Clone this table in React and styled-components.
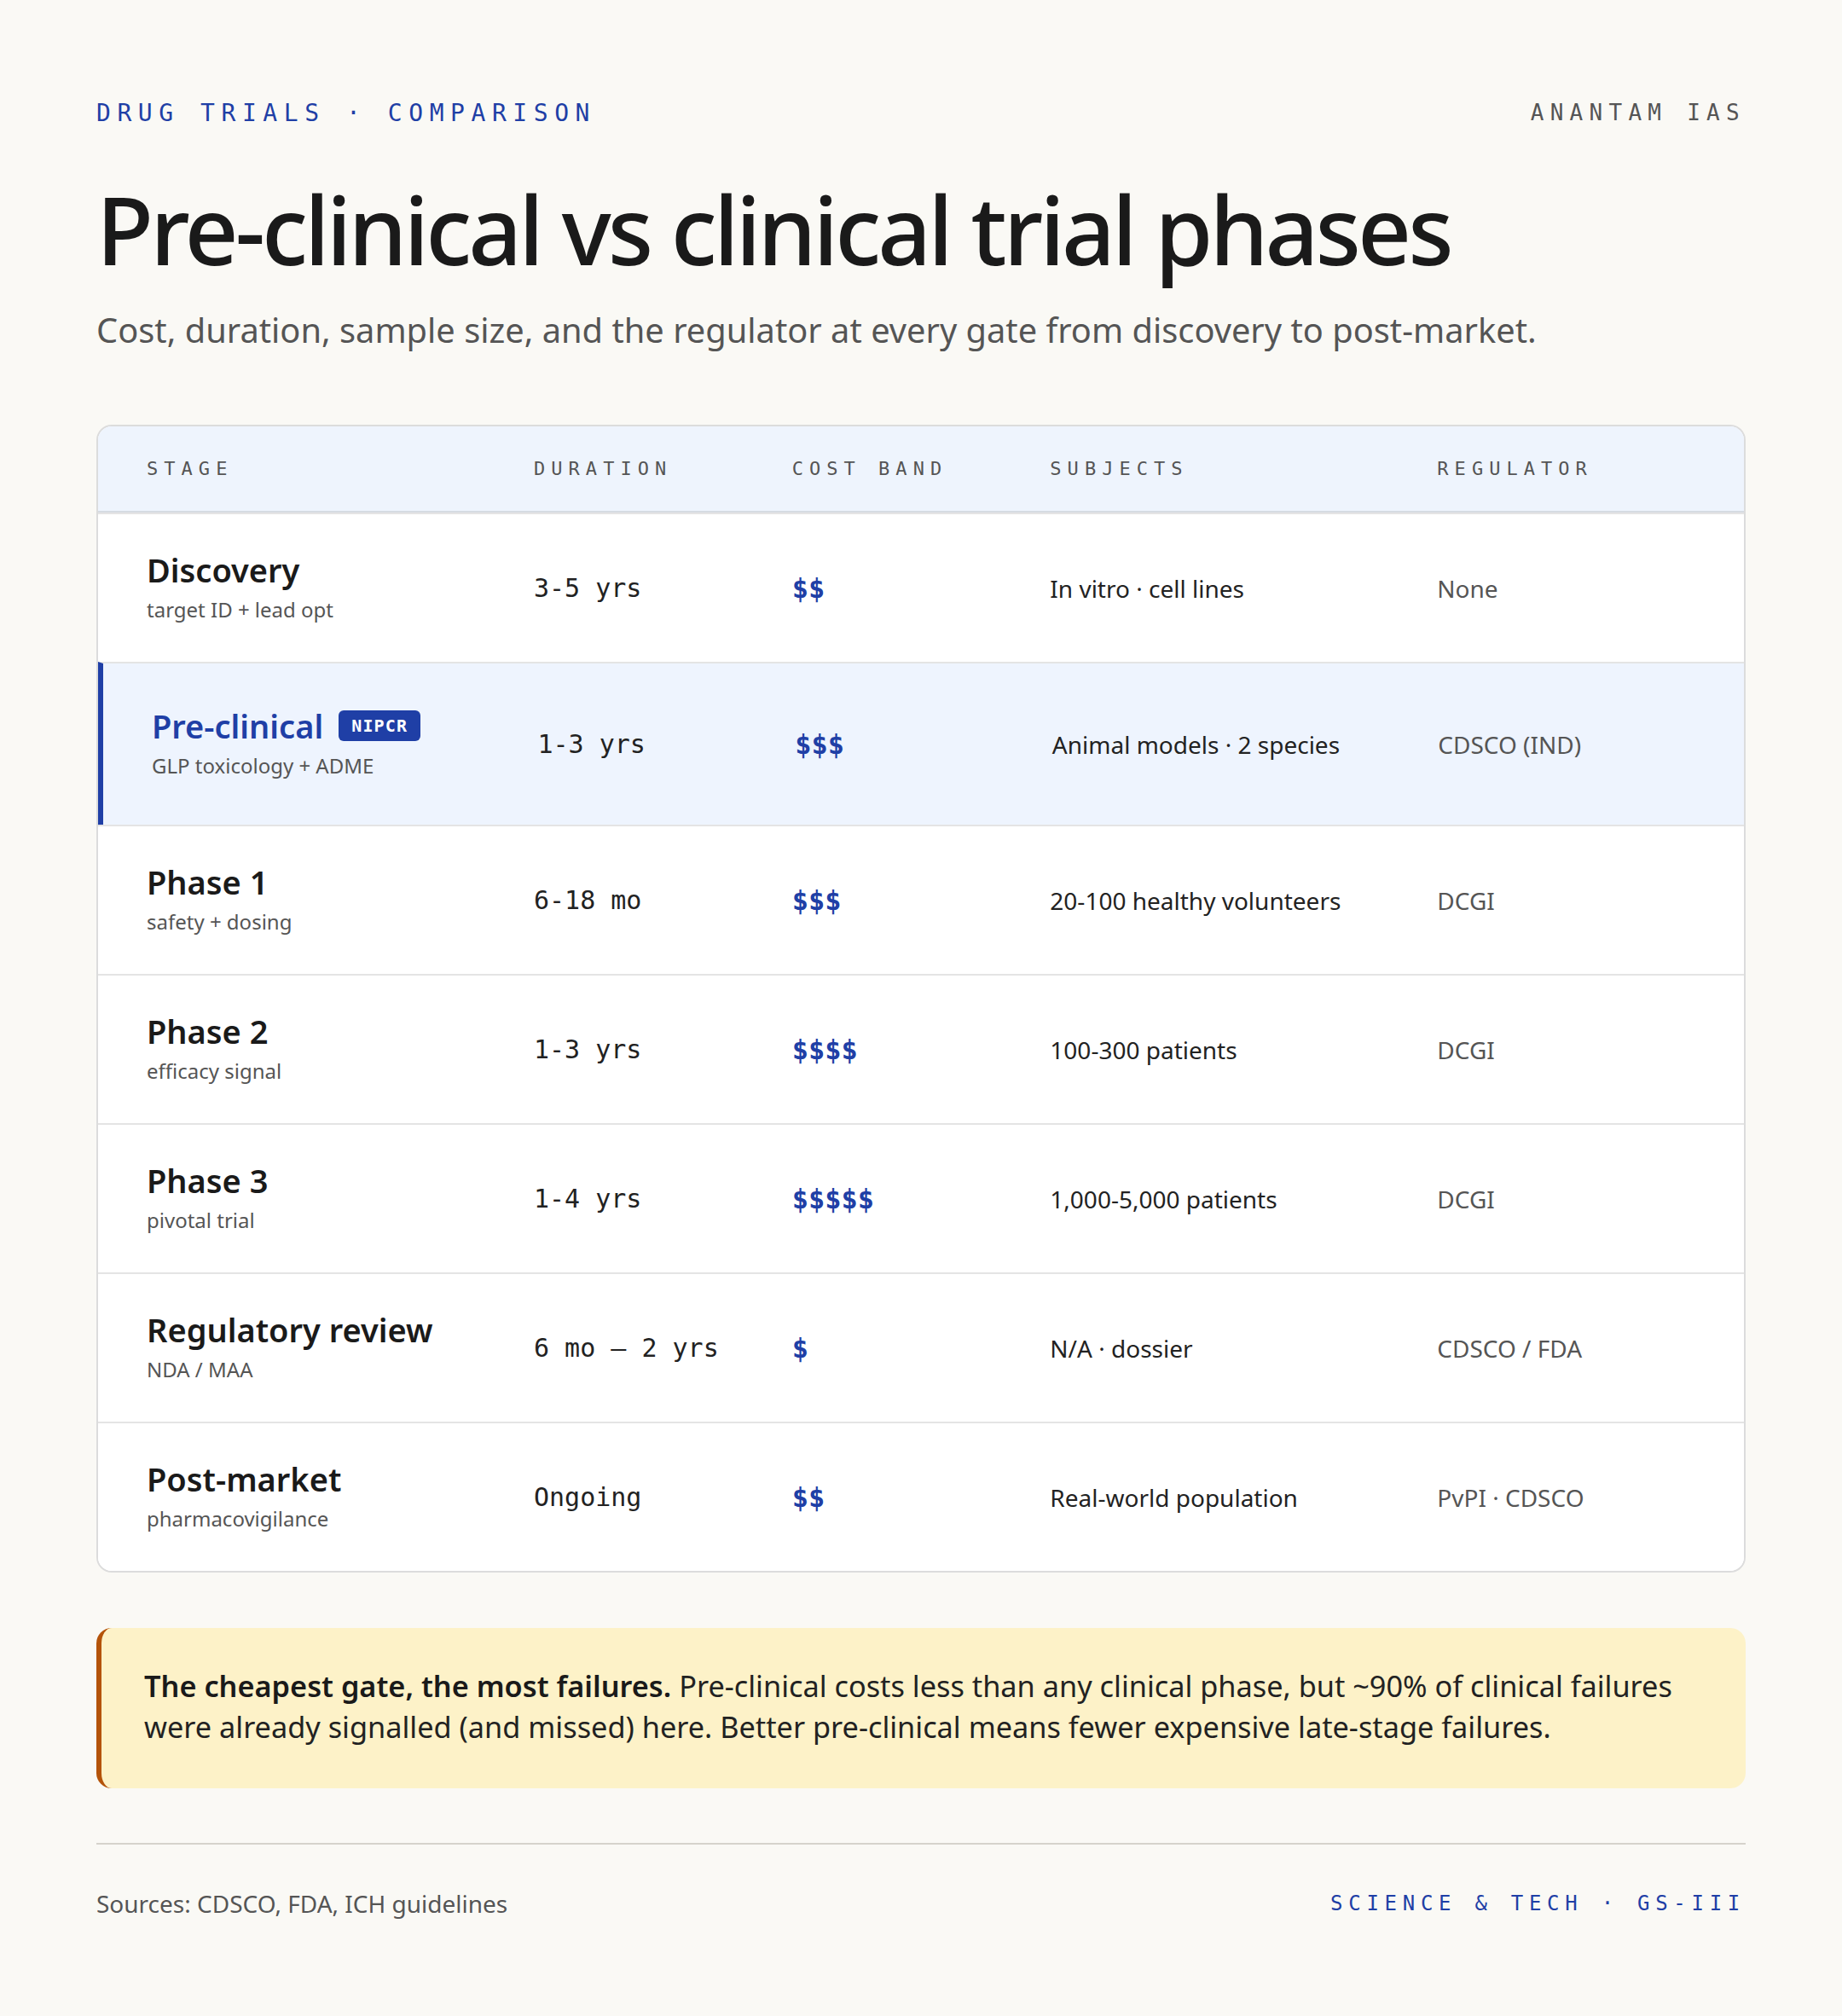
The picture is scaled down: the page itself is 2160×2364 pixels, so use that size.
import React from "react";
import styled, { createGlobalStyle } from "styled-components";

const GlobalStyle = createGlobalStyle`
  html, body {
    margin: 0;
    padding: 0;
    background: #faf9f5;
  }
  body {
    font-family: "Noto Sans", "Open Sans", sans-serif;
    color: #1a1a1a;
  }
`;

const SANS = `"Noto Sans", "Open Sans", sans-serif`;
const MONO = `"DejaVu Sans Mono", "Liberation Mono", monospace`;
const BLUE = "#1f3fa6";

const Page = styled.div`
  width: 2160px;
  height: 2364px;
  box-sizing: border-box;
  padding: 112px 113px 0;
  display: flex;
  flex-direction: column;
`;

const TopBar = styled.div`
  display: flex;
  justify-content: space-between;
  align-items: center;
  height: 40px;
`;

const Eyebrow = styled.div`
  font-family: ${MONO};
  font-size: ${(p) => p.size || 28}px;
  letter-spacing: ${(p) => p.spacing || 0.27}em;
  color: ${(p) => p.color || BLUE};
  white-space: nowrap;
`;

const Title = styled.h1`
  margin: 56px 0 0;
  font-family: ${SANS};
  font-weight: 500;
  font-size: 110px;
  line-height: 120px;
  letter-spacing: -0.036em;
  color: #1a1a1a;
`;

const Subtitle = styled.p`
  margin: 34px 0 0;
  font-family: ${SANS};
  font-size: 39.8px;
  line-height: 50px;
  color: #555;
`;

const Table = styled.div`
  margin-top: 86px;
  border: 2px solid #dcdcdc;
  border-radius: 18px;
  overflow: hidden;
  background: #fff;
`;

const Row = styled.div`
  display: grid;
  grid-template-columns: 1.5fr 1fr 1fr 1.5fr 1fr;
  align-items: center;
  padding: 0 57px;
  min-height: ${(p) => p.height}px;
  box-sizing: border-box;
  background: ${(p) => (p.active ? "#eef4fe" : "#fff")};
  border-left: ${(p) => (p.active ? `6px solid ${BLUE}` : "none")};
  & + & {
    border-top: 2px solid #e4e4e4;
  }
`;

const HeadRow = styled(Row)`
  background: #eef4fd;
  border-bottom: 2px solid #d6dbe2;
`;

const HeadCell = styled.div`
  font-family: ${MONO};
  font-size: 22px;
  letter-spacing: 0.32em;
  color: #555;
`;

const StageCell = styled.div`
  display: flex;
  flex-direction: column;
  gap: 8px;
  margin-top: -4px;
`;

const StageName = styled.div`
  display: flex;
  align-items: center;
  gap: 18px;
  font-family: ${SANS};
  font-weight: 600;
  font-size: 38px;
  line-height: 46px;
  color: ${(p) => (p.active ? BLUE : "#1a1a1a")};
`;

const Badge = styled.span`
  font-family: ${MONO};
  font-weight: 700;
  font-size: 20px;
  letter-spacing: 0.06em;
  color: #fff;
  background: ${BLUE};
  border-radius: 6px;
  padding: 5px 15px;
  line-height: 26px;
`;

const StageSub = styled.div`
  font-family: ${SANS};
  font-size: 24px;
  line-height: 32px;
  color: #555;
`;

const Duration = styled.div`
  font-family: ${MONO};
  font-size: 30px;
  color: #222;
  white-space: pre;
`;

const Cost = styled.div`
  font-family: ${MONO};
  font-weight: 700;
  font-size: 32px;
  color: ${BLUE};
`;

const TextCell = styled.div`
  font-family: ${SANS};
  font-size: 28px;
  color: ${(p) => (p.muted ? "#555" : "#222")};
`;

const Callout = styled.div`
  margin-top: 65px;
  background: #fdf2c8;
  border-left: 6px solid #b45309;
  border-radius: 18px;
  padding: 44px 56px 48px 50px;
  font-family: ${SANS};
  font-size: 34.3px;
  line-height: 48px;
  color: #222;
`;

const Lead = styled.strong`
  font-weight: 600;
  color: #1a1a1a;
`;

const Footer = styled.div`
  margin-top: 64px;
  border-top: 2px solid #d6d3cc;
  padding-top: 50px;
  display: flex;
  justify-content: space-between;
  align-items: center;
`;

const Source = styled.div`
  font-family: ${SANS};
  font-size: 28px;
  color: #555;
`;

const rows = [
  { name: "Discovery", sub: "target ID + lead opt", dur: "3-5 yrs", cost: "$$", subj: "In vitro · cell lines", reg: "None" },
  { name: "Pre-clinical", badge: "NIPCR", sub: "GLP toxicology + ADME", dur: "1-3 yrs", cost: "$$$", subj: "Animal models · 2 species", reg: "CDSCO (IND)", active: true },
  { name: "Phase 1", sub: "safety + dosing", dur: "6-18 mo", cost: "$$$", subj: "20-100 healthy volunteers", reg: "DCGI" },
  { name: "Phase 2", sub: "efficacy signal", dur: "1-3 yrs", cost: "$$$$", subj: "100-300 patients", reg: "DCGI" },
  { name: "Phase 3", sub: "pivotal trial", dur: "1-4 yrs", cost: "$$$$$", subj: "1,000-5,000 patients", reg: "DCGI" },
  { name: "Regulatory review", sub: "NDA / MAA", dur: "6 mo – 2 yrs", cost: "$", subj: "N/A · dossier", reg: "CDSCO / FDA" },
  { name: "Post-market", sub: "pharmacovigilance", dur: "Ongoing", cost: "$$", subj: "Real-world population", reg: "PvPI · CDSCO" },
];

export default function App() {
  return (
    <>
      <GlobalStyle />
      <Page>
        <TopBar>
          <Eyebrow>DRUG TRIALS · COMPARISON</Eyebrow>
          <Eyebrow size={26} spacing={0.28} color="#555">ANANTAM IAS</Eyebrow>
        </TopBar>
        <Title>Pre-clinical vs clinical trial phases</Title>
        <Subtitle>
          Cost, duration, sample size, and the regulator at every gate from discovery to post-market.
        </Subtitle>

        <Table>
          <HeadRow height={101}>
            <HeadCell>STAGE</HeadCell>
            <HeadCell>DURATION</HeadCell>
            <HeadCell>COST BAND</HeadCell>
            <HeadCell>SUBJECTS</HeadCell>
            <HeadCell>REGULATOR</HeadCell>
          </HeadRow>
          {rows.map((r) => (
            <Row key={r.name} active={r.active} height={r.active ? 191 : 175}>
              <StageCell>
                <StageName active={r.active}>
                  {r.name}
                  {r.badge && <Badge>{r.badge}</Badge>}
                </StageName>
                <StageSub>{r.sub}</StageSub>
              </StageCell>
              <Duration>{r.dur}</Duration>
              <Cost>{r.cost}</Cost>
              <TextCell>{r.subj}</TextCell>
              <TextCell muted>{r.reg}</TextCell>
            </Row>
          ))}
        </Table>

        <Callout>
          <Lead>The cheapest gate, the most failures.</Lead>{" "}
          <span>
            Pre-clinical costs less than any clinical phase, but ~90% of clinical failures were
            already signalled (and missed) here. Better pre-clinical means fewer expensive
            late-stage failures.
          </span>
        </Callout>

        <Footer>
          <Source>Sources: CDSCO, FDA, ICH guidelines</Source>
          <Eyebrow size={24} spacing={0.28}>SCIENCE &amp; TECH · GS-III</Eyebrow>
        </Footer>
      </Page>
    </>
  );
}
